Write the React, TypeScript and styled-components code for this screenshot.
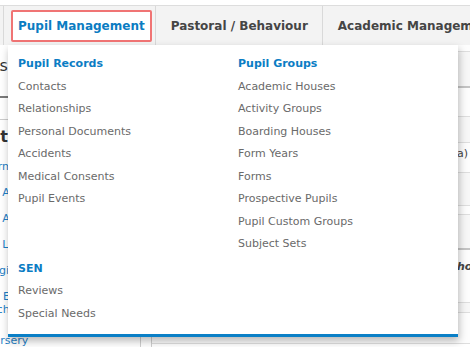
import React from "react";
import styled, { createGlobalStyle } from "styled-components";

const GlobalStyle = createGlobalStyle`
  html, body {
    margin: 0;
    padding: 0;
    background: #ffffff;
  }
  body {
    font-family: "DejaVu Sans", Verdana, sans-serif;
  }
`;

const Page = styled.div`
  position: relative;
  width: 470px;
  height: 347px;
  overflow: hidden;
  background: #ffffff;
`;

const TopStrip = styled.div`
  height: 5px;
  background: #ffffff;
`;

const TabBar = styled.nav`
  display: flex;
  box-sizing: border-box;
  height: 40px;
  background: #f3f3f3;
  border-top: 1px solid #dddddd;
  white-space: nowrap;
`;

const Stub = styled.div`
  width: 3px;
  flex: none;
  border-right: 1px solid #d9d9d9;
`;

const Tab = styled.div<{ $active?: boolean }>`
  display: flex;
  align-items: center;
  flex: none;
  box-sizing: border-box;
  font-size: 12px;
  font-weight: bold;
  color: ${(p) => (p.$active ? "#0b7cc2" : "#454545")};
  ${(p) =>
    p.$active
      ? `
    margin: 4px 3px 3px 7px;
    padding: 0 5px;
    background: #ffffff;
    border: 2px solid #f07474;
    border-radius: 2px;
  `
      : `
    padding: 0 14px 0 15px;
    border-left: 1px solid #d9d9d9;
  `}
`;

const Body = styled.div`
  display: flex;
  height: 302px;
`;

const Sidebar = styled.aside`
  width: 140px;
  flex: none;
  border-right: 1px solid #cfcfcf;
  overflow: hidden;
  color: #333;
`;

const SideTitle = styled.div`
  height: 42px;
  line-height: 42px;
  margin-left: -39px;
  font-size: 16px;
  white-space: nowrap;
`;

const SideTabs = styled.div`
  height: 9px;
  border-bottom: 2px solid #7a7a7a;
`;

const SideSearch = styled.div`
  height: 21px;
  border-bottom: 1px solid #cccccc;
`;

const SubTitle = styled.div`
  height: 34px;
  line-height: 34px;
  margin-left: -25px;
  font-size: 16px;
  font-weight: bold;
  white-space: nowrap;
`;

const SideLinks = styled.ul`
  list-style: none;
  margin: 0 0 0 -15px;
  padding: 0;
`;

const SideLink = styled.li<{ $wrap?: boolean; $gap?: number }>`
  padding: ${(p) => 6 + (p.$gap ?? 0)}px 0 7px;
  font-size: 11px;
  line-height: 13px;
  color: #1f7fc6;
  white-space: ${(p) => (p.$wrap ? "normal" : "nowrap")};
  max-width: ${(p) => (p.$wrap ? "64px" : "none")};
`;

const Gutter = styled.div`
  width: 10px;
  flex: none;
  border-right: 1px solid #cfcfcf;
`;

const Main = styled.section`
  flex: 1;
  display: flex;
  flex-direction: column;
  min-width: 0;
`;

const Row = styled.div<{ $h: number; $line?: number; $shade?: boolean; $align?: string }>`
  height: ${(p) => p.$h}px;
  flex: none;
  box-sizing: content-box;
  border-bottom: ${(p) => p.$line ?? 1}px solid ${(p) => ((p.$line ?? 1) > 1 ? "#c4c4c4" : "#dedede")};
  background: ${(p) => (p.$shade ? "#f7f7f7" : "#fdfdfd")};
  font-size: 11px;
  line-height: 13px;
  color: #444;
  text-align: ${(p) => p.$align ?? "left"};
  white-space: nowrap;
  overflow: hidden;
`;

const RowNote = styled.span`
  display: inline-block;
  padding: 4px 2px 0 0;
`;

const RowEmphasis = styled.span`
  display: inline-block;
  padding: 10px 0 0 297px;
  font-weight: bold;
  font-style: italic;
`;

const Dropdown = styled.div`
  position: absolute;
  top: 45px;
  left: 8px;
  width: 450px;
  height: 292px;
  box-sizing: border-box;
  background: #ffffff;
  border-bottom: 3px solid #0a7fc6;
  box-shadow: 1px 4px 8px rgba(0, 0, 0, 0.28);
  display: grid;
  grid-template-columns: 220px 1fr;
  padding: 8px 10px 0;
`;

const Column = styled.div`
  display: flex;
  flex-direction: column;
`;

const Group = styled.div`
  margin-bottom: 47px;
`;

const Heading = styled.div`
  font-size: 11px;
  line-height: 22.5px;
  font-weight: bold;
  color: #0b7dc4;
`;

const Item = styled.div`
  font-size: 11px;
  line-height: 22.5px;
  color: #6a6a6a;

  &:first-of-type {
    margin-top: 0.5px;
  }
`;

const menu = [
  [
    {
      title: "Pupil Records",
      items: ["Contacts", "Relationships", "Personal Documents", "Accidents", "Medical Consents", "Pupil Events"],
    },
    { title: "SEN", items: ["Reviews", "Special Needs"] },
  ],
  [
    {
      title: "Pupil Groups",
      items: [
        "Academic Houses",
        "Activity Groups",
        "Boarding Houses",
        "Form Years",
        "Forms",
        "Prospective Pupils",
        "Pupil Custom Groups",
        "Subject Sets",
      ],
    },
  ],
];

const App: React.FC = () => {
  return (
    <Page>
      <GlobalStyle />
      <TopStrip />
      <TabBar>
        <Stub />
        <Tab $active>Pupil Management</Tab>
        <Tab>Pastoral / Behaviour</Tab>
        <Tab>Academic Management</Tab>
      </TabBar>
      <Body>
        <Sidebar>
          <SideTitle>Pupils</SideTitle>
          <SideTabs />
          <SideSearch />
          <SubTitle>List</SubTitle>
          <SideLinks>
            <SideLink>Form Tutor</SideLink>
            <SideLink>Y7 All</SideLink>
            <SideLink>Y8 All</SideLink>
            <SideLink>Y9 LAMDA</SideLink>
            <SideLink>Registers</SideLink>
            <SideLink $wrap>AS EXAMS Tech</SideLink>
            <SideLink $gap={5}>Nursery</SideLink>
          </SideLinks>
        </Sidebar>
        <Gutter />
        <Main>
          <Row $h={6} />
          <Row $h={34} $line={2} $shade />
          <Row $h={28} />
          <Row $h={25} $shade />
          <Row $h={29} $align="right">
            <RowNote>(optional data)</RowNote>
          </Row>
          <Row $h={32} $shade />
          <Row $h={8} />
          <Row $h={33} $line={2} $shade />
          <Row $h={52}>
            <RowEmphasis>Show</RowEmphasis>
          </Row>
          <Row $h={9} $shade />
          <Row $h={30} />
        </Main>
      </Body>
      <Dropdown>
        {menu.map((col, ci) => (
          <Column key={ci}>
            {col.map((group) => (
              <Group key={group.title}>
                <Heading>{group.title}</Heading>
                {group.items.map((it) => (
                  <Item key={it}>{it}</Item>
                ))}
              </Group>
            ))}
          </Column>
        ))}
      </Dropdown>
    </Page>
  );
};

export default App;
